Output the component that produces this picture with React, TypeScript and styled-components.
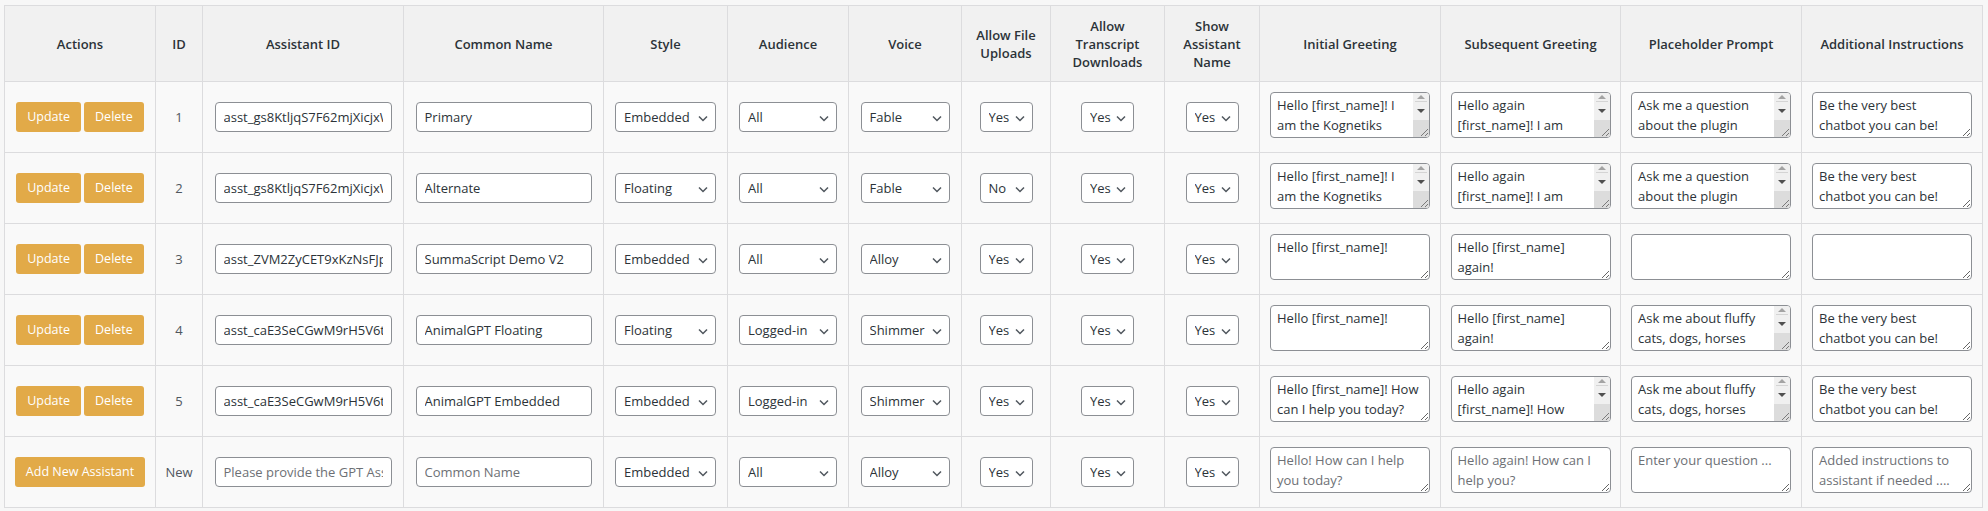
import React from "react";
import styled, { createGlobalStyle } from "styled-components";

const Global = createGlobalStyle`
  html, body { margin: 0; padding: 0; background: #f7f7f7; }
  body { font-family: "Open Sans", "Noto Sans", Arial, sans-serif; color: #2c3338; }
  #root { padding: 5px 0 0 4px; }
`;

const Table = styled.table`
  border-collapse: collapse;
  table-layout: fixed;
  width: 1978px;
  background: #f9f9f9;
  border: 1px solid #dcdcde;
`;

const Th = styled.th`
  background: #f1f1f1;
  border: 1px solid #dcdcde;
  font-size: 13px;
  font-weight: 600;
  line-height: 18px;
  color: #2c3338;
  text-align: center;
  vertical-align: middle;
  padding: 0 8px;
  height: 75px;
`;

const Td = styled.td`
  border: 1px solid #dcdcde;
  text-align: center;
  vertical-align: middle;
  padding: 0;
  height: 70px;
  font-size: 13px;
  line-height: 20px;
  color: #50575e;
`;

const ButtonGroup = styled.div`
  display: flex;
  justify-content: center;
  gap: 3px;
`;

const ActionButton = styled.button<{ $minW?: number }>`
  height: 30px;
  min-width: ${(p) => p.$minW ?? 0}px;
  padding: 0 11px;
  background: #e2aa48;
  color: #fff;
  border: none;
  border-radius: 3px;
  font-family: "Open Sans", "Noto Sans", Arial, sans-serif;
  font-size: 12.5px;
  line-height: 30px;
  white-space: nowrap;
  cursor: pointer;
`;

const TextInput = styled.input<{ $w: number }>`
  box-sizing: border-box;
  width: ${(p) => p.$w}px;
  height: 30px;
  padding: 0 8px;
  border: 1px solid #8c8f94;
  border-radius: 4px;
  background: #fff;
  font-family: "Open Sans", "Noto Sans", Arial, sans-serif;
  font-size: 13px;
  color: #2c3338;
  vertical-align: middle;
  &::placeholder { color: #6d7075; }
`;

const SelectWrap = styled.span<{ $w: number }>`
  position: relative;
  display: inline-block;
  width: ${(p) => p.$w}px;
  vertical-align: middle;
`;

const Select = styled.select`
  appearance: none;
  -webkit-appearance: none;
  box-sizing: border-box;
  width: 100%;
  height: 30px;
  padding: 0 22px 0 8px;
  border: 1px solid #8c8f94;
  border-radius: 4px;
  background: #fff;
  font-family: "Open Sans", "Noto Sans", Arial, sans-serif;
  font-size: 13px;
  color: #2c3338;
  display: block;
`;

const Chevron = styled.svg`
  position: absolute;
  right: 5px;
  top: 8px;
  width: 16px;
  height: 16px;
  pointer-events: none;
`;

const Field = styled.span`
  position: relative;
  display: inline-block;
`;

const TextArea = styled.textarea<{ $scroll?: boolean }>`
  box-sizing: border-box;
  display: inline-block;
  width: 160px;
  height: 46px;
  padding: 2px ${(p) => (p.$scroll ? 23 : 6)}px 2px 6px;
  border: 1px solid #8c8f94;
  border-radius: 4px;
  background: #fff;
  font-family: "Open Sans", "Noto Sans", Arial, sans-serif;
  font-size: 13px;
  line-height: 20px;
  color: #2c3338;
  overflow: hidden;
  resize: vertical;
  text-align: left;
  &::placeholder { color: #6d7075; }
`;

const FakeBar = styled.span`
  position: absolute;
  top: 1px;
  right: 1px;
  width: 16px;
  height: 44px;
  display: flex;
  flex-direction: column;
  background: #f0f0f0;
  border-radius: 0 3px 3px 0;
  overflow: hidden;
  pointer-events: none;
`;

const BarButton = styled.span<{ $h: number; $line?: boolean }>`
  height: ${(p) => p.$h}px;
  flex: none;
  display: flex;
  align-items: center;
  justify-content: center;
  border-bottom: ${(p) => (p.$line ? "1px solid #d4d4d4" : "none")};
  margin: 0 2px;
`;

const BarCorner = styled.span`
  flex: 1;
  background: #dcdcdc;
  display: flex;
  align-items: flex-end;
  justify-content: flex-end;
`;

function ScrollOverlay() {
  return (
    <FakeBar>
      <BarButton $h={8} $line>
        <svg width="8" height="4" viewBox="0 0 8 4">
          <path d="M0 4L4 0 8 4z" fill="#a3a3a3" />
        </svg>
      </BarButton>
      <BarButton $h={18}>
        <svg width="8" height="4" viewBox="0 0 8 4">
          <path d="M0 0L4 4 8 0z" fill="#505050" />
        </svg>
      </BarButton>
      <BarCorner>
        <svg width="12" height="12" viewBox="0 0 12 12">
          <path d="M11 4L4 11M11 8L8 11" stroke="#7a7a7a" strokeWidth="1" />
        </svg>
      </BarCorner>
    </FakeBar>
  );
}

function Area({ value, placeholder, scroll }: { value?: string; placeholder?: string; scroll?: boolean }) {
  return (
    <Field>
      <TextArea $scroll={scroll} defaultValue={value} placeholder={placeholder} />
      {scroll && <ScrollOverlay />}
    </Field>
  );
}

function Dropdown({ w, value, options }: { w: number; value: string; options: string[] }) {
  return (
    <SelectWrap $w={w}>
      <Select defaultValue={value}>
        {options.map((o) => (
          <option key={o}>{o}</option>
        ))}
      </Select>
      <Chevron viewBox="0 0 16 16">
        <path d="M4 6.5l4 4 4-4" fill="none" stroke="#50575e" strokeWidth="1.5" />
      </Chevron>
    </SelectWrap>
  );
}

type Row = {
  id: string;
  aid: string;
  name: string;
  style: string;
  audience: string;
  voice: string;
  file: string;
  transcript: string;
  show: string;
  g1: string;
  g2: string;
  ph: string;
  add: string;
  s: [boolean, boolean, boolean, boolean];
};

const KOG = "Hello [first_name]! I am the Kognetiks Chatbot. How can I help you today?";
const KOG2 = "Hello again [first_name]! I am happy to help you again.";
const PLUG = "Ask me a question about the plugin settings...";
const BEST = "Be the very best chatbot you can be!";
const FLUFFY = "Ask me about fluffy cats, dogs, horses and more ...";

const rows: Row[] = [
  { id: "1", aid: "asst_gs8KtljqS7F62mjXicjxWfQk", name: "Primary", style: "Embedded", audience: "All", voice: "Fable", file: "Yes", transcript: "Yes", show: "Yes", g1: KOG, g2: KOG2, ph: PLUG, add: BEST, s: [true, true, true, false] },
  { id: "2", aid: "asst_gs8KtljqS7F62mjXicjxWfQk", name: "Alternate", style: "Floating", audience: "All", voice: "Fable", file: "No", transcript: "Yes", show: "Yes", g1: KOG, g2: KOG2, ph: PLUG, add: BEST, s: [true, true, true, false] },
  { id: "3", aid: "asst_ZVM2ZyCET9xKzNsFJpLm", name: "SummaScript Demo V2", style: "Embedded", audience: "All", voice: "Alloy", file: "Yes", transcript: "Yes", show: "Yes", g1: "Hello [first_name]!", g2: "Hello [first_name] again!", ph: "", add: "", s: [false, false, false, false] },
  { id: "4", aid: "asst_caE3SeCGwM9rH5V6tQzA", name: "AnimalGPT Floating", style: "Floating", audience: "Logged-in", voice: "Shimmer", file: "Yes", transcript: "Yes", show: "Yes", g1: "Hello [first_name]!", g2: "Hello [first_name] again!", ph: FLUFFY, add: BEST, s: [false, false, true, false] },
  { id: "5", aid: "asst_caE3SeCGwM9rH5V6tQzA", name: "AnimalGPT Embedded", style: "Embedded", audience: "Logged-in", voice: "Shimmer", file: "Yes", transcript: "Yes", show: "Yes", g1: "Hello [first_name]! How can I help you today?", g2: "Hello again [first_name]! How can I help you?", ph: FLUFFY, add: BEST, s: [false, true, true, false] },
];

const STYLES = ["Embedded", "Floating"];
const AUD = ["All", "Logged-in", "Visitors"];
const VOICES = ["Alloy", "Echo", "Fable", "Onyx", "Nova", "Shimmer"];
const YN = ["Yes", "No"];

const widths = [151, 47, 201, 200, 124, 121, 113, 89, 114, 95, 181, 180, 181, 181];
const heads = [
  "Actions",
  "ID",
  "Assistant ID",
  "Common Name",
  "Style",
  "Audience",
  "Voice",
  "Allow File Uploads",
  "Allow Transcript Downloads",
  "Show Assistant Name",
  "Initial Greeting",
  "Subsequent Greeting",
  "Placeholder Prompt",
  "Additional Instructions",
];

export default function App() {
  return (
    <>
      <Global />
      <Table>
        <colgroup>
          {widths.map((w, i) => (
            <col key={i} style={{ width: w }} />
          ))}
        </colgroup>
        <thead>
          <tr>
            {heads.map((h) => (
              <Th key={h}>{h}</Th>
            ))}
          </tr>
        </thead>
        <tbody>
          {rows.map((r) => (
            <tr key={r.id}>
              <Td>
                <ButtonGroup>
                  <ActionButton>Update</ActionButton>
                  <ActionButton>Delete</ActionButton>
                </ButtonGroup>
              </Td>
              <Td>{r.id}</Td>
              <Td>
                <TextInput $w={177} defaultValue={r.aid} />
              </Td>
              <Td>
                <TextInput $w={176} defaultValue={r.name} />
              </Td>
              <Td>
                <Dropdown w={101} value={r.style} options={STYLES} />
              </Td>
              <Td>
                <Dropdown w={98} value={r.audience} options={AUD} />
              </Td>
              <Td>
                <Dropdown w={89} value={r.voice} options={VOICES} />
              </Td>
              <Td>
                <Dropdown w={53} value={r.file} options={YN} />
              </Td>
              <Td>
                <Dropdown w={53} value={r.transcript} options={YN} />
              </Td>
              <Td>
                <Dropdown w={53} value={r.show} options={YN} />
              </Td>
              <Td>
                <Area scroll={r.s[0]} value={r.g1} />
              </Td>
              <Td>
                <Area scroll={r.s[1]} value={r.g2} />
              </Td>
              <Td>
                <Area scroll={r.s[2]} value={r.ph} />
              </Td>
              <Td>
                <Area scroll={r.s[3]} value={r.add} />
              </Td>
            </tr>
          ))}
          <tr>
            <Td>
              <ButtonGroup>
                <ActionButton $minW={130}>Add New Assistant</ActionButton>
              </ButtonGroup>
            </Td>
            <Td>New</Td>
            <Td>
              <TextInput $w={177} placeholder="Please provide the GPT Assistant ID" />
            </Td>
            <Td>
              <TextInput $w={176} placeholder="Common Name" />
            </Td>
            <Td>
              <Dropdown w={101} value="Embedded" options={STYLES} />
            </Td>
            <Td>
              <Dropdown w={98} value="All" options={AUD} />
            </Td>
            <Td>
              <Dropdown w={89} value="Alloy" options={VOICES} />
            </Td>
            <Td>
              <Dropdown w={53} value="Yes" options={YN} />
            </Td>
            <Td>
              <Dropdown w={53} value="Yes" options={YN} />
            </Td>
            <Td>
              <Dropdown w={53} value="Yes" options={YN} />
            </Td>
            <Td>
              <Area placeholder="Hello! How can I help you today?" />
            </Td>
            <Td>
              <Area placeholder="Hello again! How can I help you?" />
            </Td>
            <Td>
              <Area placeholder="Enter your question ..." />
            </Td>
            <Td>
              <Area placeholder="Added instructions to assistant if needed ...." />
            </Td>
          </tr>
        </tbody>
      </Table>
    </>
  );
}
